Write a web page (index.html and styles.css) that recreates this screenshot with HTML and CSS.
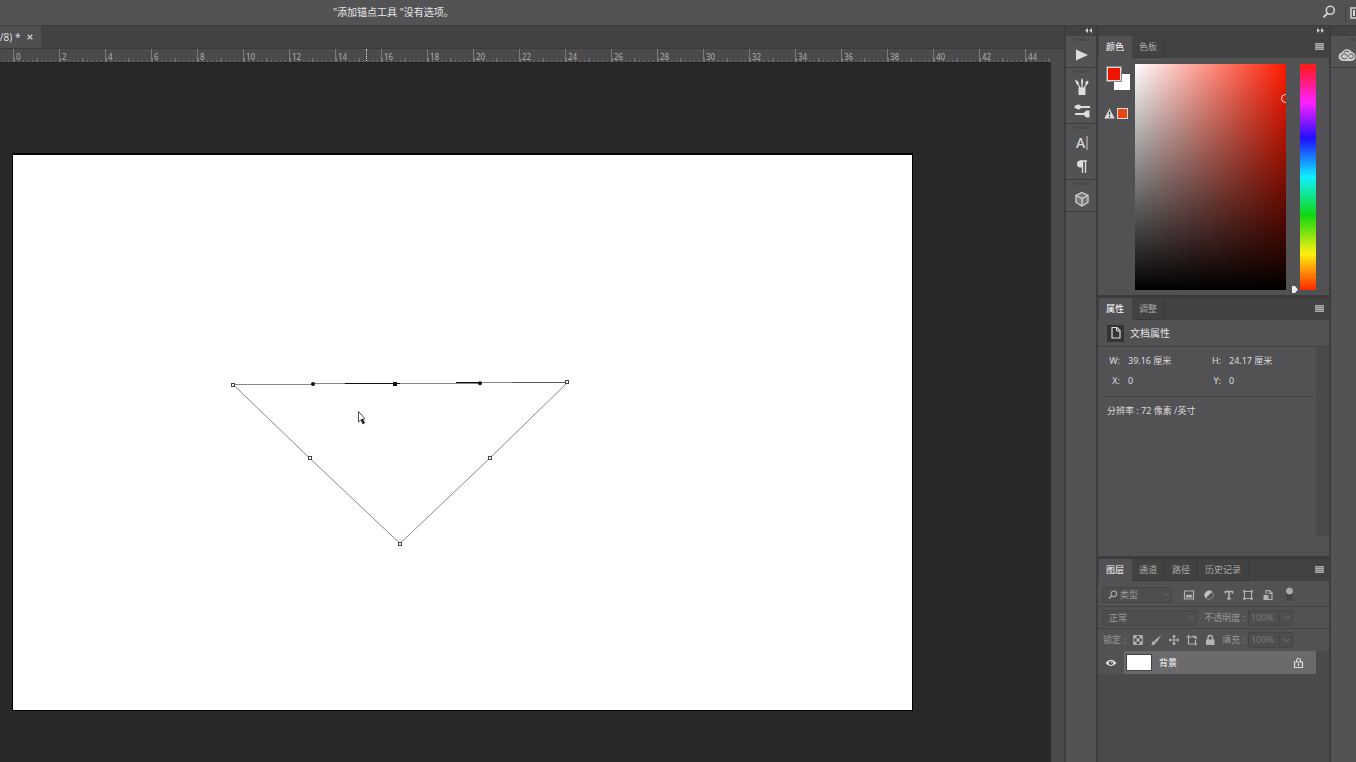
FILE: index.html
```html
<!DOCTYPE html>
<html lang="zh-CN">
<head>
	<meta charset="utf-8">
	<title>Photoshop</title>
	<link rel="stylesheet" href="styles.css">
</head>
<body>
	<header class="options">
		<p class="hint">"添加锚点工具 "没有选项。</p>
		<button class="icon search" aria-label="搜索">
			<svg width="14" height="14" viewBox="0 0 14 14"><circle cx="8.3" cy="5.3" r="4" fill="none" stroke="#d4d4d4" stroke-width="1.6"/><path d="M5.4 8.4L1.5 12.3" stroke="#d4d4d4" stroke-width="2"/></svg>
		</button>
		<button class="icon workspace" aria-label="工作区">
			<svg width="12" height="12" viewBox="0 0 12 12"><path d="M1 1h12v10H1z" fill="none" stroke="#d4d4d4" stroke-width="1.5"/><path d="M3 3h2v6H3z" fill="#d4d4d4"/></svg>
		</button>
	</header>

	<div class="main">
		<section class="document">
			<div class="docTabs">
				<div class="docTab">3/8) * <button class="icon" aria-label="关闭"><svg width="6" height="6" viewBox="0 0 6 6"><path d="M.7.7l4.6 4.6M5.3.7L.7 5.3" stroke="#c4c4c4" stroke-width="1.5"/></svg></button></div>
			</div>
			<div class="work">
				<div class="view">
					<div class="ruler" id="ruler"><i class="rulerPos"></i></div>
					<div class="canvas">
						<div class="artboard">
							<svg width="600" height="420" viewBox="13 155 600 420">
								<g fill="none" stroke="#888" stroke-width="1">
									<path d="M233 384.5L310 458.5L400 543.5L490 458L567.5 382.5"/>
									<path d="M233 384.5H313M313 383.5H480M480 382.5H567.5"/>
								</g>
								<path d="M345 383.5H400M456 382.5H480" stroke="#111" stroke-width="1.2"/>
								<path d="M512 382.5H566" stroke="#555"/>
								<g fill="#fff" stroke="#444">
									<rect x="231.5" y="383.5" width="3" height="3"/>
									<rect x="308.5" y="456.5" width="3" height="3"/>
									<rect x="398.5" y="542.5" width="3" height="3"/>
									<rect x="488.5" y="456.5" width="3" height="3"/>
									<rect x="565.5" y="380.5" width="3" height="3"/>
								</g>
								<g fill="#111">
									<circle cx="313" cy="384" r="2"/>
									<circle cx="480" cy="383.2" r="2"/>
									<rect x="393" y="382" width="4" height="4"/>
								</g>
								<path d="M358.5 411.5v10.5l2.3-2 2 4 1.7-1-1.8-3.6 2.3-.6z" fill="#fff" stroke="#222" stroke-width=".8"/>
								<path d="M361 419l1.8 4.5 1.8-.8-2-4z" fill="#111"/>
							</svg>
						</div>
					</div>
				</div>
				<div class="scroll"></div>
			</div>
		</section>

		<aside class="dock">
			<div class="dockTop"><svg width="7" height="5" viewBox="0 0 7 5"><path d="M3 0v5L0 2.500zM7 0v5L4 2.500z" fill="#ccc"/></svg></div>
			<div class="group">
				<button class="icon" aria-label="动作"><svg width="18" height="18" viewBox="0 0 18 18"><path d="M3 3.500v11l12-5.500z" fill="#ddd"/></svg></button>
			</div>
			<div class="group">
				<button class="icon" aria-label="画笔预设"><svg width="18" height="18" viewBox="0 0 18 18"><path d="M5.500 9.500h7V17h-7z" fill="#ddd"/><path d="M7 10L4.500 5M9 10V5M11 10l2.500-4" stroke="#ddd" stroke-width="1.300"/><path d="M2 2l3 1 .8 3-2 .7zM8 4.500Q8 1.500 9 0q1.500 2 1.200 4.500L9 6zM12 5l2-2.500 1.500 1-.5 2.500-1.500.8z" fill="#ddd"/></svg></button>
				<button class="icon" aria-label="画笔"><svg width="18" height="18" viewBox="0 0 18 18"><path d="M7 5h10M2 12h9" stroke="#ddd" stroke-width="1.800"/><path d="M1 5Q4 1.500 7.500 3v4Q4 8.500 1 5zM9.500 12l4-3.500h3v7h-3z" fill="#ddd"/></svg></button>
			</div>
			<div class="group">
				<button class="icon letter" aria-label="字符">A<svg width="2" height="14" viewBox="0 0 2 14"><path d="M1 0v14" stroke="#ccc"/></svg></button>
				<button class="icon" aria-label="段落"><svg width="18" height="18" viewBox="0 0 18 18"><path d="M9 2.500v7H7.500a3.500 3.500 0 0 1 0-7z" fill="#ddd"/><path d="M7 3h7M9.500 3v12M12.500 3v12" stroke="#ddd" stroke-width="1.300"/></svg></button>
			</div>
			<div class="group">
				<button class="icon" aria-label="3D"><svg width="18" height="18" viewBox="0 0 18 18"><path d="M9 2.500l6 3v7l-6 3.500-6-3.500v-7z" fill="#777" stroke="#d4d4d4" stroke-width="1.300"/><path d="M3 5.500l6 3 6-3M9 8.500V16" fill="none" stroke="#d4d4d4" stroke-width="1.300"/></svg></button>
			</div>
		</aside>

		<aside class="panels">
			<div class="panelsTop"><svg width="7" height="5" viewBox="0 0 7 5"><path d="M0 0v5l3-2.500zM4 0v5l3-2.500z" fill="#ccc"/></svg></div>

			<section class="panel colorPanel">
				<nav class="tabs">
					<button class="tab active">颜色</button>
					<button class="tab">色板</button>
					<button class="icon menu" aria-label="菜单"></button>
				</nav>
				<div class="picker">
					<div class="swatches">
						<div class="pair">
							<button class="back" aria-label="背景色"></button>
							<button class="fore" aria-label="前景色"></button>
						</div>
						<div class="gamut">
							<svg width="11" height="11" viewBox="0 0 11 11"><path d="M5.500.5L10.700 10.500H.3z" fill="#ddd"/><path d="M5.500 3.500v3.500M5.500 8v1.500" stroke="#444" stroke-width="1.300"/></svg>
							<button class="safe" aria-label="可打印颜色"></button>
						</div>
					</div>
					<div class="field"><i class="ring"></i></div>
					<input class="hue" type="range" min="0" max="360" value="360" aria-label="色相">
				</div>
			</section>

			<section class="panel propPanel">
				<nav class="tabs">
					<button class="tab active">属性</button>
					<button class="tab">调整</button>
					<button class="icon menu" aria-label="菜单"></button>
				</nav>
				<div class="propHead">
					<span class="docIcon"><svg width="12" height="14" viewBox="0 0 12 14"><path d="M2 1.500h5L10 4.500v7.500H2z" fill="none" stroke="#ddd" stroke-width="1.200"/><path d="M6.500 1.500V5H10" fill="none" stroke="#ddd"/></svg></span>
					文档属性
				</div>
				<div class="propBody">
					<div class="props">
						<dl class="sizes">
							<dt>W:</dt><dd>39.16 厘米</dd><dt>H:</dt><dd>24.17 厘米</dd>
							<dt>X:</dt><dd>0</dd><dt>Y:</dt><dd>0</dd>
						</dl>
						<p class="res">分辨率 : 72 像素 /英寸</p>
					</div>
					<div class="propScroll"></div>
				</div>
			</section>

			<section class="panel layerPanel">
				<nav class="tabs">
					<button class="tab active">图层</button>
					<button class="tab">通道</button>
					<button class="tab">路径</button>
					<button class="tab">历史记录</button>
					<button class="icon menu" aria-label="菜单"></button>
				</nav>
				<div class="row filter">
					<label class="box kind">
						<svg width="10" height="10" viewBox="0 0 10 10"><circle cx="5.800" cy="3.800" r="2.800" fill="none" stroke="#aaa" stroke-width="1.200"/><path d="M3.800 5.800L1 8.600" stroke="#aaa" stroke-width="1.400"/></svg>
						<select aria-label="滤镜类型"><option>类型</option></select>
						<svg width="7" height="5" viewBox="0 0 7 5"><path d="M.5.7l3 3 3-3" fill="none" stroke="#6c6b6d"/></svg>
					</label>
					<div class="filters">
						<button class="icon" aria-label="像素图层"><svg width="12" height="12" viewBox="0 0 12 12"><path d="M1.500 2h9v8h-9z" fill="none" stroke="#b4b4b4" stroke-width="1.200"/><path d="M3 8.500V6.500l1.500-1.500L6 6.500l1.500-1.500L9 6.500v2z" fill="#b4b4b4"/></svg></button>
						<button class="icon" aria-label="调整图层"><svg width="12" height="12" viewBox="0 0 12 12"><circle cx="6" cy="6" r="4.200" fill="none" stroke="#8c8c8c"/><path d="M2.700 9.300a4.700 4.700 0 0 1 6.600-6.600z" fill="#c0c0c0"/></svg></button>
						<button class="icon" aria-label="文字图层"><svg width="12" height="12" viewBox="0 0 12 12"><path d="M2.500 4.500V2.500h7v2M6 2.500v7M4 9.700h4" fill="none" stroke="#b4b4b4" stroke-width="1.600"/></svg></button>
						<button class="icon" aria-label="形状图层"><svg width="12" height="12" viewBox="0 0 12 12"><path d="M3 2.500h6M3 9.500h6M2.500 3v6M9.500 3v6" fill="none" stroke="#b4b4b4"/><path d="M1 1h2.500v2.500H1zM8.500 1H11v2.500H8.500zM1 8.500h2.500V11H1zM8.500 8.500H11V11H8.500z" fill="#a4a4a4"/></svg></button>
						<button class="icon" aria-label="智能对象"><svg width="12" height="12" viewBox="0 0 12 12"><path d="M4 5V1.500h3.500L10 4v6.500H6" fill="none" stroke="#b4b4b4" stroke-width="1.200"/><path d="M7 1.500V4.500h3" fill="none" stroke="#b4b4b4"/><path d="M1.500 6h5v5h-5z" fill="#b4b4b4"/></svg></button>
					</div>
					<button class="icon toggle" aria-label="滤镜开关"></button>
				</div>
				<div class="row">
					<label class="box blend">
						<select aria-label="混合模式"><option>正常</option></select>
						<svg width="7" height="5" viewBox="0 0 7 5"><path d="M.5.7l3 3 3-3" fill="none" stroke="#6c6b6d"/></svg>
					</label>
					<label class="percentLabel" for="opacity">不透明度 :</label>
					<div class="box percent">
						<input id="opacity" type="text" value="100%">
						<button class="icon" aria-label="不透明度滑块"><svg width="7" height="5" viewBox="0 0 7 5"><path d="M.5.7l3 3 3-3" fill="none" stroke="#777"/></svg></button>
					</div>
				</div>
				<div class="row lock">
					<span>锁定 :</span>
					<div class="locks">
						<button class="icon" aria-label="锁定透明像素"><svg width="12" height="12" viewBox="0 0 12 12"><path d="M1.500 1.500h9v9h-9z" fill="none" stroke="#a4a4a4"/><path d="M2 2h2.500v2.500H2zM7.500 2H10v2.500H7.500zM4.500 4.500h3v3h-3zM2 7.500h2.500V10H2zM7.500 7.500H10V10H7.500z" fill="#b4b4b4"/></svg></button>
						<button class="icon" aria-label="锁定图像像素"><svg width="12" height="12" viewBox="0 0 12 12"><path d="M11.500 1L6.500 8.500 4.500 6.500z" fill="#b4b4b4"/><path d="M4 6.700l2 2Q4.500 11.700 .8 11.200q1.500-.8 1.300-2.500Q3 6.700 4 6.700z" fill="#b4b4b4"/></svg></button>
						<button class="icon" aria-label="锁定位置"><svg width="12" height="12" viewBox="0 0 12 12"><path d="M6 2v8M2 6h8" stroke="#b4b4b4" stroke-width="1.200"/><path d="M6 .5l2 2.500H4zM6 11.500l2-2.500H4zM.5 6L3 4v4zM11.500 6L9 4v4z" fill="#b4b4b4"/></svg></button>
						<button class="icon" aria-label="防止嵌套"><svg width="12" height="12" viewBox="0 0 12 12"><path d="M.5 3h7M2.500 1v9h9M9.500 11.500V6M7 1.500L10.500 5" fill="none" stroke="#b4b4b4" stroke-width="1.200"/><path d="M8 2h2.500v3z" fill="#b4b4b4"/></svg></button>
						<button class="icon" aria-label="锁定全部"><svg width="12" height="12" viewBox="0 0 12 12"><path d="M2 5.500h8.500v5.500H2z" fill="#b4b4b4"/><path d="M4 6V3.800a2.200 2.200 0 0 1 4.500 0V6" fill="none" stroke="#b4b4b4" stroke-width="1.400"/></svg></button>
					</div>
					<label class="percentLabel" for="fill">填充 :</label>
					<div class="box percent">
						<input id="fill" type="text" value="100%">
						<button class="icon" aria-label="填充滑块"><svg width="7" height="5" viewBox="0 0 7 5"><path d="M.5.7l3 3 3-3" fill="none" stroke="#777"/></svg></button>
					</div>
				</div>
				<div class="layers">
					<div class="layer">
						<button class="icon eye" aria-label="可见性"><svg width="12" height="10" viewBox="0 0 12 10"><path d="M.5 5Q6-1.500 11.500 5 6 11.500.5 5z" fill="#ddd"/><circle cx="6" cy="5" r="2.100" fill="#444"/><circle cx="6.500" cy="4.400" r=".8" fill="#ddd"/></svg></button>
						<div class="layerItem">
							<span class="thumb"></span>
							<span class="layerName">背景</span>
							<svg width="11" height="12" viewBox="0 0 11 12"><path d="M1.500 5h8v5.500h-8z" fill="none" stroke="#ddd" stroke-width="1.200"/><path d="M3.500 5V3.500a2 2 0 0 1 4 0V5" fill="none" stroke="#ddd" stroke-width="1.200"/><path d="M5.500 6.500v2.500" stroke="#ddd" stroke-width="1.400"/></svg>
						</div>
					</div>
				</div>
			</section>
		</aside>

		<aside class="edge">
			<div class="edgeTop"></div>
			<div class="group">
				<button class="icon" aria-label="Creative Cloud"><svg width="18" height="14" viewBox="0 0 18 14"><path d="M4.800 13A4.300 4.300 0 0 1 4 4.500 5.600 5.600 0 0 1 14 4a4.600 4.600 0 0 1-.5 9z" fill="#ccc"/><path d="M8.800 10Q6.500 12 4.300 10.300t0-3.800Q6.300 5 8 6.600l3.500 3.300q1.800 1.300 3.300-.2t0-3.300q-1.600-1.400-3.300 0L10.200 7.600M6 4.300Q8 2.300 11 3.800" fill="none" stroke="#555" stroke-width="1"/></svg></button>
			</div>
		</aside>
	</div>

	<script>
		// One ruler cell for every two centimetres
		var ruler = document.getElementById("ruler");
		for (var cm = 0; cm <= 44; cm += 2) {
			var cell = document.createElement("span");
			cell.className = "cell";
			cell.textContent = cm;
			ruler.appendChild(cell);
		}
	</script>
</body>
</html>
```

FILE: styles.css
```css
* {
	box-sizing: border-box;
}
body {
	display: flex;
	flex-direction: column;
	height: 100vh;
	margin: 0;
	overflow: hidden;
	background: #3c3c3d;
	color: #dcdcdc;
	font-family: "Noto Sans", "Noto Sans CJK SC", sans-serif;
	font-size: 9px;
	line-height: 12px;
}
p, dl, dd {
	margin: 0;
}
button, input, select {
	margin: 0;
	padding: 0;
	border: 0;
	background: none;
	color: inherit;
	font: inherit;
}
svg {
	display: block;
	flex: none;
}
.icon {
	display: flex;
	align-items: center;
	justify-content: center;
}

/* options bar */
.options {
	display: flex;
	align-items: center;
	height: 25px;
	flex: none;
	background: #535254;
}
.hint {
	flex: 1;
	padding: 0 0 2px 333px;
	font-size: 10px;
	color: #e8e8e8;
}
.search {
	width: 32px;
	height: 22px;
	padding-bottom: 2px;
}
.workspace {
	width: 11px;
	height: 18px;
	border-left: 1px solid #424143;
	padding-left: 4px;
	justify-content: flex-start;
	overflow: hidden;
}

.main {
	display: flex;
	flex: 1;
	min-height: 0;
	gap: 2px;
	padding-top: 1px;
}

/* document window */
.document {
	display: flex;
	flex-direction: column;
	flex: 1;
	min-width: 0;
}
.docTabs {
	height: 22px;
	background: #424243;
}
.docTab {
	display: flex;
	align-items: center;
	justify-content: flex-end;
	gap: 4px;
	width: 41px;
	height: 22px;
	padding-right: 8px;
	overflow: hidden;
	background: #4f4e50;
	font-size: 10px;
	white-space: pre;
}
.work {
	display: flex;
	flex: 1;
	min-height: 0;
	border-top: 1px solid #3c3c3d;
}
.view {
	display: flex;
	flex-direction: column;
	flex: 1;
	min-width: 0;
}
.scroll {
	width: 13px;
	background: #4b4a4c;
}
.ruler {
	position: relative;
	display: flex;
	height: 14px;
	flex: none;
	overflow: hidden;
	background: #4a494b;
	border-bottom: 1px solid #222;
}
.ruler::before {
	content: "";
	flex: none;
	width: 13px;
	background: linear-gradient(270deg, transparent 4px, #69686a 4px) 100% 100% / 5px 2px repeat-x;
}
.cell {
	flex: none;
	width: 46px;
	padding-left: 2px;
	border-left: 1px solid #7a797b;
	background:
		linear-gradient(90deg, #7a797b 1px, transparent 1px) 0 100% / 50% 4px repeat-x,
		linear-gradient(90deg, #727173 1px, transparent 1px) 0 100% / 10% 2px repeat-x;
	color: #b0afb1;
	font-size: 8px;
	line-height: 16px;
}
.rulerPos {
	position: absolute;
	left: 366px;
	top: 0;
	height: 14px;
	border-left: 1px dotted #ddd;
}
.canvas {
	display: flex;
	flex: 1;
	padding: 90px 138px 51px 12px;
	background: #2a282b;
}
.artboard {
	flex: 1;
	min-width: 0;
	overflow: hidden;
	border: 1px solid #000;
	border-top-width: 2px;
	background: #fff;
}

/* collapsed icon dock */
.dock {
	width: 30px;
	background: #535254;
}
.dockTop, .panelsTop, .edgeTop {
	display: flex;
	align-items: center;
	justify-content: flex-end;
	height: 10px;
	flex: none;
	padding: 0 5px 2px 0;
	background: #424243;
}
.dockTop {
	padding-right: 4px;
}
.group {
	padding-top: 7px;
	border-bottom: 1px solid #3c3c3d;
	background: repeating-linear-gradient(90deg, #424143 0 1px, transparent 1px 2px) 8px 2px / 16px 3px no-repeat;
}
.group .icon {
	width: 100%;
	height: 24px;
}
.dock .icon {
	padding-left: 2px;
}
.letter {
	gap: 1px;
	font-family: "Noto Sans", sans-serif;
	font-size: 14px;
	font-weight: 500;
	color: #ddd;
}

/* right hand panels */
.panels {
	display: flex;
	flex-direction: column;
	width: 231px;
}
.panel {
	margin-bottom: 2px;
	background: #525153;
}
.tabs {
	display: flex;
	height: 22px;
	padding-left: 1px;
	background: #424243;
}
.tab {
	padding: 0 7px;
	border-right: 1px solid #3a3a3b;
	border-bottom: 1px solid #3a3a3b;
	color: #a8a8a8;
}
.tab.active {
	border-color: #525153;
	background: #525153;
	color: #fff;
}
.menu {
	width: 9px;
	height: 7px;
	margin: 7px 5px 0 auto;
	background: repeating-linear-gradient(#a8a8a8 0 1px, #848484 1px 2px);
}

.picker {
	display: flex;
	height: 237px;
	padding: 6px 13px 0 8px;
}
.swatches {
	width: 29px;
	padding-top: 2px;
}
.pair {
	position: relative;
	width: 24px;
	height: 26px;
}
.fore, .back {
	position: absolute;
	width: 16px;
	height: 16px;
}
.fore {
	left: 0;
	top: 0;
	border: 1px solid #8a8a8a;
	outline: 1px solid #ddd;
	outline-offset: -2px;
	background: #f01400;
}
.back {
	right: 0;
	bottom: 2px;
	background: #fff;
}
.gamut {
	display: flex;
	gap: 2px;
	margin-top: 16px;
	margin-left: -2px;
}
.safe {
	width: 11px;
	height: 11px;
	border: 1px solid #ddd;
	background: #e84510;
}
.field {
	position: relative;
	flex: 1;
	height: 226px;
	overflow: hidden;
	background:
		linear-gradient(transparent, #000),
		linear-gradient(90deg, #fff, #ff1a00);
}
.ring {
	position: absolute;
	right: -4px;
	top: 30px;
	width: 9px;
	height: 9px;
	border: 1px solid #eee;
	border-radius: 50%;
}
.hue {
	appearance: none;
	writing-mode: vertical-lr;
	width: 24px;
	height: 232px;
	margin: -3px 0 0 6px;
	background: linear-gradient(#ff1a10, #ff20ff 17%, #2010ff 33%, #10f0ff 50%, #10d810 67%, #fff010 84%, #ff2800) 100% 3px / 16px 226px no-repeat;
}
.hue::-webkit-slider-thumb {
	appearance: none;
	width: 24px;
	height: 7px;
	background: #eee;
	clip-path: polygon(0 0, 3px 0, 6px 50%, 3px 100%, 0 100%);
}

.propPanel {
	display: flex;
	flex-direction: column;
	height: 259px;
}
.propPanel, .layerPanel {
	border-top: 1px solid #3a3a3b;
}
.propHead {
	display: flex;
	align-items: center;
	gap: 6px;
	height: 27px;
	padding-left: 9px;
	border-bottom: 1px solid #424143;
	font-size: 10px;
	color: #e4e4e4;
}
.docIcon {
	display: flex;
	align-items: center;
	justify-content: center;
	width: 17px;
	height: 17px;
	background: #333234;
}
.propBody {
	display: flex;
	flex: 1;
	padding-bottom: 20px;
}
.props {
	flex: 1;
	padding: 4px 3px 0;
}
.propScroll {
	width: 13px;
	background: #4a494b;
}
.sizes {
	display: grid;
	grid-template-columns: 19px 66px 19px 1fr;
	column-gap: 8px;
	padding: 0 0 5px;
	border-bottom: 1px solid #424143;
	line-height: 20px;
}
.sizes dt {
	text-align: right;
}
.res {
	padding: 8px 6px;
}

.layerPanel {
	display: flex;
	flex-direction: column;
	flex: 1;
	min-height: 0;
	margin-bottom: 0;
}
.row {
	display: flex;
	align-items: center;
	height: 22px;
	flex: none;
	padding: 0 36px 0 4px;
	color: #999;
}
.filter {
	height: 26px;
	padding-top: 2px;
	border-bottom: 1px solid #424143;
}
.filter + .row {
	border-bottom: 1px solid #424143;
}
.box {
	display: flex;
	align-items: center;
	height: 16px;
	border: 1px solid #454446;
	border-radius: 2px;
	background: #4e4d4f;
}
.box select, .box input {
	appearance: none;
	flex: 1;
	min-width: 0;
	height: 14px;
	line-height: 14px;
}
.kind {
	gap: 2px;
	width: 70px;
	padding: 0 2px 0 5px;
}
.blend {
	width: 95px;
	padding: 0 2px 0 6px;
}
.filters {
	display: flex;
	justify-content: space-between;
	width: 91px;
	margin-left: 11px;
}
.toggle {
	width: 7px;
	height: 14px;
	margin: 0 0 2px auto;
	border-radius: 4px;
	background: radial-gradient(circle at 50% 4px, #aaa 3px, #454446 4px);
}
.percentLabel {
	margin-left: auto;
	margin-right: 3px;
}
.percent {
	width: 45px;
	color: #7a797b;
}
.percent input {
	padding-left: 2px;
}
.percent .icon {
	width: 13px;
	height: 14px;
	border-left: 1px solid #454446;
}
.lock {
	padding-left: 5px;
}
.locks {
	display: flex;
	gap: 6px;
	margin-left: 6px;
}
.layers {
	flex: 1;
	padding-right: 13px;
	background: #4a494b;
}
.layer {
	display: flex;
	height: 23px;
}
.eye {
	width: 26px;
	background: #525153;
}
.layerItem {
	display: flex;
	align-items: center;
	flex: 1;
	padding: 0 12px 0 2px;
	background: #6a696b;
}
.thumb {
	width: 26px;
	height: 17px;
	border: 1px solid #444;
	background: #fff;
}
.layerName {
	flex: 1;
	padding-left: 7px;
	color: #fff;
}

/* clipped dock at the window edge */
.edge {
	width: 25px;
	overflow: hidden;
	background: #535254;
}
.edge .group {
	background-position: 17px 2px;
}
.edge .icon {
	width: 32px;
}
```
